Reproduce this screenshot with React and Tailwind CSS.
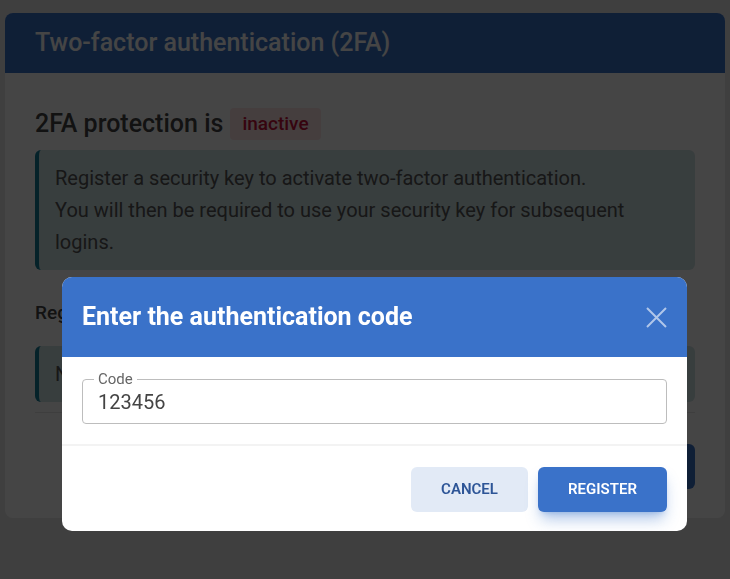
import React from "react";

const font = { fontFamily: "Roboto, 'Noto Sans', sans-serif" };

function CloseIcon() {
  return (
    <svg width="21" height="21" viewBox="0 0 21 21" fill="none">
      <path d="M1 1L20 20M20 1L1 20" stroke="currentColor" strokeWidth="2" />
    </svg>
  );
}

function TwoFactorCard() {
  return (
    <div className="rounded-lg bg-white">
      <div className="flex h-[60px] items-center rounded-t-lg bg-[#3a72c9] px-[30px]">
        <h1 className="text-[25px] font-medium text-white">Two-factor authentication (2FA)</h1>
      </div>
      <div className="px-[30px] pt-[35px] pb-[29px]">
        <div className="flex h-[32px] items-center gap-[7px]">
          <span className="text-[25px] font-medium text-[#444]">2FA protection is</span>
          <span className="flex h-[32px] items-center rounded bg-[#ffe4e6] px-[12px] text-[19px] font-medium text-[#c8103a]">
            inactive
          </span>
        </div>
        <div className="mt-[10px] rounded-md border-l-4 border-[#157f99] bg-[#cfe3e5] px-4 py-3 text-[20px] leading-8 text-[#555]">
          <p>Register a security key to activate two-factor authentication.</p>
          <p>You will then be required to use your security key for subsequent logins.</p>
        </div>
        <h2 className="mt-[30px] text-[19px] font-medium leading-[26px] text-[#444]">Registered security keys</h2>
        <div className="border-b border-[#e3e3e3] pt-5 pb-[10px]">
          <div className="rounded-md border-l-4 border-[#157f99] bg-[#cfe3e5] px-4 py-3 text-[20px] leading-8 text-[#555]">
            No security keys registered yet.
          </div>
        </div>
        <div className="mt-[31px] flex justify-end">
          <button className="h-[45px] rounded-md bg-[#3a72c9] px-6 text-[15px] font-semibold text-white">
            REGISTER A SECURITY KEY
          </button>
        </div>
      </div>
    </div>
  );
}

function CodeDialog() {
  return (
    <div className="fixed top-[277px] left-[62px] w-[625px] overflow-hidden rounded-[10px] bg-white">
      <div className="flex h-[80px] items-center justify-between bg-[#3a72c9] px-[20px]">
        <h3 className="text-[25px] font-bold text-white">Enter the authentication code</h3>
        <button className="text-white/60">
          <CloseIcon />
        </button>
      </div>
      <div className="px-[20px] pt-[14px] pb-[20px]">
        <fieldset className="rounded border border-[#bdbdbd] pr-[15px] pb-[6px] pl-[11px]">
          <legend className="px-[4px] text-[15px] leading-4 text-[#666]">Code</legend>
          <input
            className="block h-[30px] w-full pl-[4px] text-[20px] text-[#444] outline-none"
            defaultValue="123456"
          />
        </fieldset>
      </div>
      <div className="flex justify-end gap-[10px] border-t-2 border-[#f3f3f3] px-[20px] pt-[21px] pb-[19px]">
        <button className="h-[45px] w-[117px] rounded-md bg-[#e2eaf6] text-[15px] font-semibold text-[#2d5597]">
          CANCEL
        </button>
        <button className="h-[45px] w-[129px] rounded-md bg-[#3a72c9] text-[15px] font-semibold text-white shadow-lg shadow-[#3a72c9]/40">
          REGISTER
        </button>
      </div>
    </div>
  );
}

export default function App() {
  return (
    <div className="min-h-screen bg-[#e9e9e9] px-[5px] pt-[13px]" style={font}>
      <TwoFactorCard />
      <div className="fixed inset-0 bg-black/[0.73]" />
      <CodeDialog />
    </div>
  );
}
